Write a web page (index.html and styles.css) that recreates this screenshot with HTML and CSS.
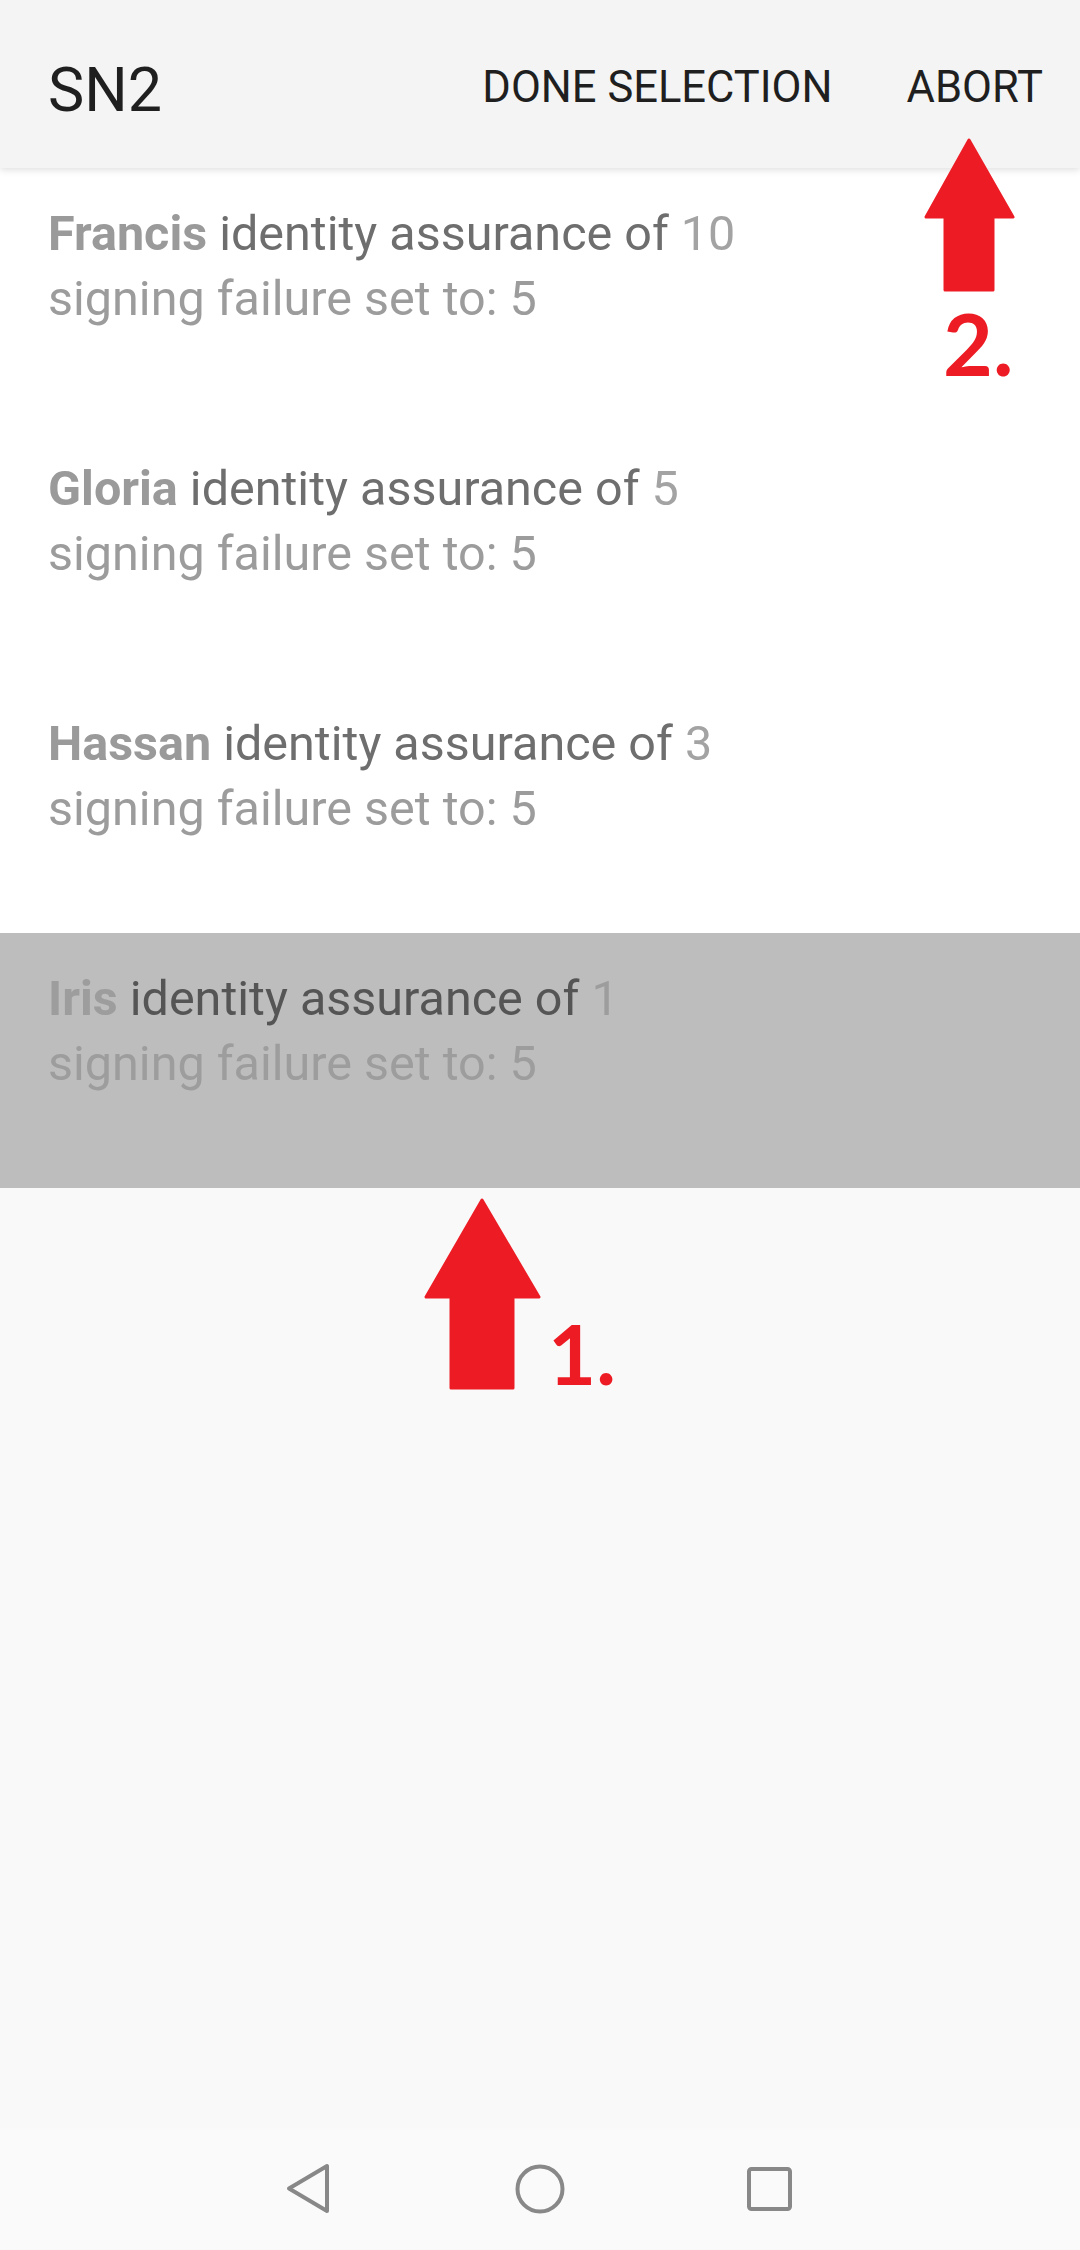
FILE: index.html
```html
<!DOCTYPE html>
<html lang="en">
<head>
<meta charset="utf-8">
<title>SN2</title>
<link rel="stylesheet" href="styles.css">
</head>
<body>
<div class="app">
  <header class="topbar">
    <div class="title">SN2</div>
    <div class="actions">
      <span class="action">DONE SELECTION</span>
      <span class="action">ABORT</span>
    </div>
  </header>
  <ul class="list">
    <li class="item">
      <div class="line1"><b class="name">Francis</b> <span class="mid">identity assurance of</span> <span class="num">10</span></div>
      <div class="line2">signing failure set to: 5</div>
    </li>
    <li class="item">
      <div class="line1"><b class="name">Gloria</b> <span class="mid">identity assurance of</span> <span class="num">5</span></div>
      <div class="line2">signing failure set to: 5</div>
    </li>
    <li class="item">
      <div class="line1"><b class="name">Hassan</b> <span class="mid">identity assurance of</span> <span class="num">3</span></div>
      <div class="line2">signing failure set to: 5</div>
    </li>
    <li class="item selected">
      <div class="line1"><b class="name">Iris</b> <span class="mid">identity assurance of</span> <span class="num">1</span></div>
      <div class="line2">signing failure set to: 5</div>
    </li>
  </ul>
  <div class="filler"></div>
  <nav class="navbar">
    <svg class="navicon" width="60" height="60" viewBox="0 0 60 60"><polygon points="9,29.5 47,7 47,52" fill="none" stroke="#888" stroke-width="4" stroke-linejoin="round"/></svg>
    <svg class="navicon" width="60" height="60" viewBox="0 0 60 60"><circle cx="30" cy="30" r="22.5" fill="none" stroke="#888" stroke-width="4"/></svg>
    <svg class="navicon" width="60" height="60" viewBox="0 0 60 60"><rect x="9" y="10" width="41" height="40" rx="2.5" fill="none" stroke="#888" stroke-width="4"/></svg>
  </nav>

  <svg class="arrow arrow-two" width="100" height="160" viewBox="0 0 100 160"><polygon points="49,5 93,82 73,82 73,155 25,155 25,82 6,82" fill="#ed1c24" stroke="#ed1c24" stroke-width="3" stroke-linejoin="round"/></svg>
  <div class="mark mark-two">2.</div>
  <svg class="arrow arrow-one" width="125" height="200" viewBox="0 0 125 200"><polygon points="62,5 119,102 93,102 93,193 31,193 31,102 6,102" fill="#ed1c24" stroke="#ed1c24" stroke-width="3" stroke-linejoin="round"/></svg>
  <div class="mark mark-one">1.</div>
</div>
</body>
</html>
```

FILE: styles.css
```css
* { box-sizing: border-box; }
html, body {
  margin: 0;
  padding: 0;
}
body {
  width: 1080px;
  height: 2250px;
  font-family: Roboto, "Noto Sans", sans-serif;
  background: #f9f9f9;
  overflow: hidden;
}
.app {
  position: relative;
  width: 1080px;
  height: 2250px;
  display: flex;
  flex-direction: column;
}
.topbar {
  position: relative;
  z-index: 2;
  height: 168px;
  flex: none;
  background: #f4f4f4;
  box-shadow: 0 2px 7px rgba(0, 0, 0, 0.13);
  display: flex;
  align-items: flex-start;
  justify-content: space-between;
  padding: 0 37px 0 48px;
  color: #1f1f1f;
}
.title {
  font-size: 61px;
  line-height: 60px;
  margin-top: 60px;
  font-weight: 400;
}
.actions {
  display: flex;
  gap: 74px;
  margin-top: 66px;
}
.action {
  font-size: 43.5px;
  line-height: 43px;
  font-weight: 400;
}
.list {
  list-style: none;
  margin: 0;
  padding: 0;
  flex: none;
}
.item {
  height: 255px;
  background: #ffffff;
  padding: 33px 0 0 48px;
  font-size: 48.5px;
  line-height: 65px;
  color: #9c9c9c;
}
.item .name {
  font-weight: 700;
  color: #9a9a9a;
}
.item .mid {
  color: #6e6e6e;
}
.item .num {
  color: #a3a3a3;
}
.item.selected {
  background: #bdbdbd;
}
.item.selected .mid {
  color: #555555;
}
.item.selected .name,
.item.selected .num,
.item.selected .line2 {
  color: #9d9d9d;
}
.filler {
  flex: 1;
  background: #f9f9f9;
}
.navbar {
  height: 122px;
  flex: none;
  background: #fafafa;
  display: flex;
  align-items: center;
  justify-content: center;
  gap: 170px;
}
.navicon {
  display: block;
}
.arrow {
  position: absolute;
  z-index: 5;
  display: block;
}
.arrow-two {
  left: 920px;
  top: 135px;
}
.arrow-one {
  left: 420px;
  top: 1195px;
}
.mark {
  position: absolute;
  z-index: 5;
  font-family: Lato, "Open Sans", sans-serif;
  font-weight: 700;
  color: #ed1c24;
  line-height: 1;
}
.mark-two {
  font-size: 86px;
  left: 943px;
  top: 300px;
}
.mark-one {
  font-size: 83px;
  left: 548px;
  top: 1312px;
}
```
